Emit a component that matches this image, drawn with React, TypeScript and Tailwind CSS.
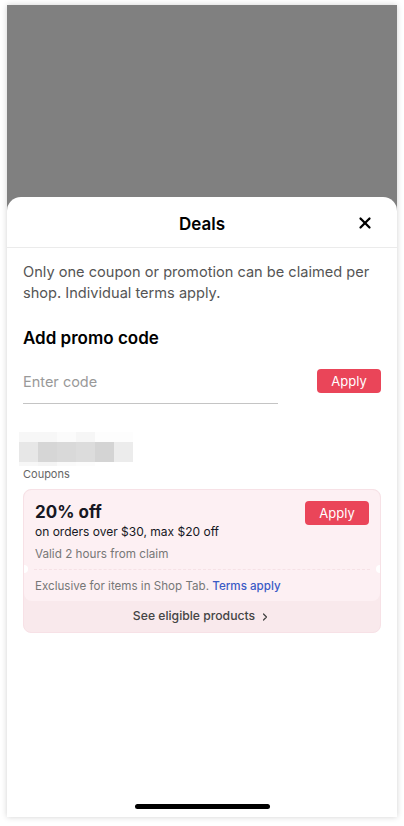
import { ChevronRight, X } from 'lucide-react'

const BLUR = [
  ['#f7f7f7', '#f7f7f7', '#fbfbfb', '#f6f6f6', '#fdfdfd', '#fdfdfd'],
  ['#e7e7e7', '#d6d6d6', '#d9d9d9', '#dcdcdc', '#d4d4d4', '#ececec'],
  ['#f7f7f7', '#f4f4f4', '#fafafa', '#fcfcfc', '#ffffff', '#ffffff'],
]

function Blurred() {
  return (
    <div className="flex flex-col">
      <div className="flex h-[10px]">
        {BLUR[0].map((c, i) => <div key={i} className="w-[19px] h-full" style={{ background: c }} />)}
      </div>
      <div className="flex h-[20px]">
        {BLUR[1].map((c, i) => <div key={i} className="w-[19px] h-full" style={{ background: c }} />)}
      </div>
      <div className="flex h-[4px]">
        {BLUR[2].map((c, i) => <div key={i} className="w-[19px] h-full" style={{ background: c }} />)}
      </div>
    </div>
  )
}

export default function App() {
  return (
    <div className="w-[404px] h-[826px] bg-white pt-[5px] pl-[7px] overflow-hidden" style={{ fontFamily: 'Inter, Roboto, sans-serif' }}>
      <div className="w-[390px] h-[812px] bg-[#808080] flex flex-col shadow-[0_0_6px_rgba(0,0,0,0.18)]">
        <div className="h-[192px] shrink-0" />
        <div className="flex-1 bg-white rounded-t-[14px] flex flex-col">
          <div className="relative h-[51px] flex items-center justify-center border-b border-[#ebebeb]">
            <span className="pt-[5px] text-[17px] font-semibold text-black">Deals</span>
            <button type="button" className="absolute right-[23px] top-[17px] text-black" aria-label="Close">
              <X size={18} strokeWidth={3} />
            </button>
          </div>

          <div className="px-4">
            <p className="mt-[14px] text-[14.6px] leading-[21px] text-[#555]">
              Only one coupon or promotion can be claimed per shop. Individual terms apply.
            </p>

            <h2 className="mt-[23px] text-[17px] font-semibold text-black leading-[22px]">Add promo code</h2>

            <div className="mt-[20px] flex items-start justify-between">
              <div className="w-[255px] border-b border-[#c4c4c4] h-[35px]">
                <span className="text-[14.5px] text-[#999] leading-[22px]">Enter code</span>
              </div>
              <button type="button" className="w-[64px] h-[24px] rounded-[4px] bg-[#ea4559] text-white text-[13px] leading-[24px]">
                Apply
              </button>
            </div>

            <div className="mt-[28px] -ml-1">
              <Blurred />
            </div>
            <p className="mt-[1px] text-[11px] text-[#666] leading-[14px]">Coupons</p>

            <div className="mt-[8px] rounded-[8px] bg-[#f9e9ec] border border-[#f7e1e6] overflow-hidden">
              <div className="relative bg-[#fdf0f3] rounded-[8px]">
                <div className="flex justify-between px-[11px] pt-[11px]">
                  <div>
                    <div className="text-[17px] font-bold text-[#161823] leading-[22px]">20% off</div>
                    <div className="text-[12px] text-[#161823] leading-[18px]">on orders over $30, max $20 off</div>
                    <div className="mt-[5px] text-[11.7px] text-[#777] leading-[17px]">Valid 2 hours from claim</div>
                  </div>
                  <button type="button" className="w-[64px] h-[24px] rounded-[4px] bg-[#ea4559] text-white text-[13px] leading-[24px]">
                    Apply
                  </button>
                </div>
                <div className="mt-[6px] mx-[10px] border-t border-dashed border-[#f6e1e6]" />
                <div className="absolute left-[-4px] top-[75px] w-[8px] h-[8px] rounded-full bg-white" />
                <div className="absolute right-[-4px] top-[75px] w-[8px] h-[8px] rounded-full bg-white" />
                <div className="px-[11px] pt-[8px] pb-[6px] text-[11.6px] leading-[17px] text-[#777]">
                  Exclusive for items in Shop Tab. <span className="text-[#3b5bc6] font-medium">Terms apply</span>
                </div>
              </div>
              <div className="h-[31px] flex items-center justify-center gap-1 text-[12.2px] font-medium text-[#444]">
                See eligible products
                <ChevronRight size={12} strokeWidth={2.5} />
              </div>
            </div>
          </div>

          <div className="flex-1" />
          <div className="flex justify-center pb-[8px]">
            <div className="w-[135px] h-[5px] rounded-full bg-black" />
          </div>
        </div>
      </div>
    </div>
  )
}
